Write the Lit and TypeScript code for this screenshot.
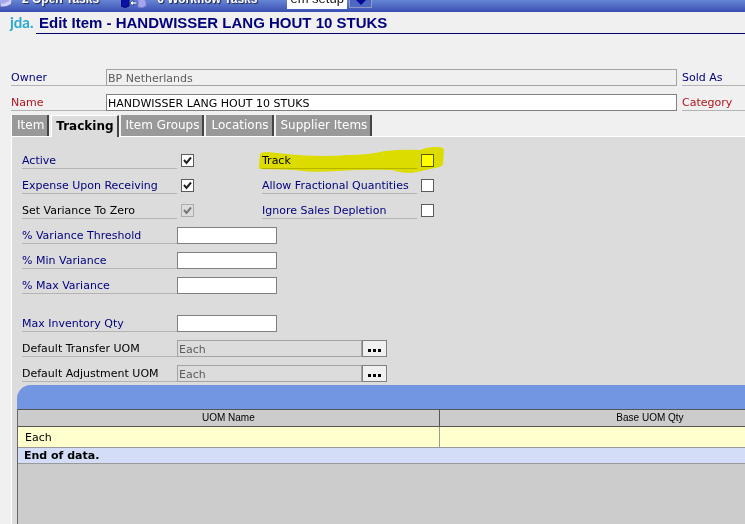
import { LitElement, html, css, nothing } from "lit";
import { customElement, property, state } from "lit/decorators.js";
import { classMap } from "lit/directives/class-map.js";

const shared = css`
  * {
    box-sizing: border-box;
  }
  input,
  button,
  select {
    font: inherit;
    color: inherit;
    margin: 0;
    padding: 0;
    border-radius: 0;
  }
`;

@customElement("task-bar")
class TaskBar extends LitElement {
  static styles = [
    shared,
    css`
      :host {
        display: flex;
        align-items: flex-end;
        height: 12px;
        overflow: hidden;
        background: linear-gradient(#6685d4, #3b50b2);
        font: bold 12px/16px "Liberation Sans", Arial, sans-serif;
        color: #fff;
      }
      svg {
        display: block;
        flex: none;
      }
      .task {
        display: flex;
        align-items: flex-end;
        flex: none;
        gap: 10px;
        height: 24px;
        margin-right: 22px;
        color: #fff;
        text-decoration: none;
        text-shadow: 1px 1px 1px #1c2450;
      }
      .task span {
        margin-bottom: 5px;
      }
      .task svg {
        margin-bottom: 2px;
      }
      .task.first svg {
        margin-bottom: 4px;
      }
      .site {
        appearance: none;
        flex: none;
        width: 60px;
        height: 20px;
        margin: 0 2px 3px 8px;
        padding: 0 3px;
        border: 0;
        background: #fff;
        color: #111;
        font-weight: normal;
        font-size: 13px;
      }
      .go {
        flex: none;
        width: 23px;
        height: 20px;
        margin-bottom: 4px;
        border: 1px solid #8e99bd;
        background: #4c68c2;
      }
      .go svg {
        margin: 8px auto 0;
      }
    `,
  ];

  render() {
    return html`
      <a class="task first" href="#open">
        <svg width="12" height="14" viewBox="0 0 12 14">
          <path d="M0 0H12V8C12 11 8 12 5 13H0Z" fill="#cdd0fb" stroke="#5054b4" />
          <path d="M0 9L3 10L9 7V4H0Z" fill="#a4a8ec" />
        </svg>
        <span>2 Open Tasks</span>
      </a>
      <a class="task" href="#workflow">
        <svg width="26" height="14" viewBox="0 0 26 14">
          <path d="M0 0H8V10Q4 13 0 10Z" fill="#0b10a6" stroke="#060a70" />
          <path d="M17 2H23L25 6V10Q21 13 17 11Z" fill="#a4a5ee" stroke="#7a7bd0" />
          <path d="M9 7L12 4V6H16V8H12V10Z" fill="#fff" stroke="#1d2c7d" stroke-width=".6" />
        </svg>
        <span>6 Workflow Tasks</span>
      </a>
      <select class="site" aria-label="Site">
        <option>em setup</option>
      </select>
      <button class="go" aria-label="Open site list">
        <svg width="12" height="8" viewBox="0 0 12 8">
          <path d="M1 0H11V2L6 7L1 2Z" fill="#000a96" />
        </svg>
      </button>
    `;
  }
}

type FieldKind = "text" | "check" | "lookup";

@customElement("form-row")
class FormRow extends LitElement {
  @property() label = "";
  @property() kind: FieldKind = "text";
  @property() value = "";
  @property() tone = "navy";
  @property({ type: Boolean }) checked = false;
  @property({ type: Boolean }) disabled = false;
  @property({ type: Boolean }) wide = false;

  static styles = [
    shared,
    css`
      :host {
        display: flex;
        height: 17px;
        font: 11px/17px "DejaVu Sans", Verdana, sans-serif;
      }
      label {
        flex: none;
        width: 155px;
        border-bottom: 1px solid #b4b4b4;
        white-space: nowrap;
        color: #00007d;
      }
      label.wide {
        width: 95px;
      }
      label.black {
        color: #000;
      }
      label.red {
        color: #b3141c;
      }
      .text {
        flex: none;
        width: 100px;
        height: 17px;
        padding: 1px 1px 0;
        border: 1px solid #808080;
        background: #fff;
        color: #000;
        outline: 0;
      }
      .text.wide {
        flex: 1;
        min-width: 0;
      }
      .text.lookup {
        width: 185px;
      }
      .text:disabled {
        border-color: #a3a3a3;
        background: transparent;
        color: #5c5c5c;
      }
      .check {
        appearance: none;
        display: block;
        width: 13px;
        height: 13px;
        margin: 2px 4px;
        border: 1px solid #5c5c5c;
        background: #fff;
      }
      .check:disabled {
        border-color: #adadad;
        background: transparent;
      }
      .box {
        display: grid;
      }
      .box > * {
        grid-area: 1 / 1;
      }
      .tick {
        margin: 2px 4px;
        fill: none;
        stroke: #222;
        stroke-width: 2;
        pointer-events: none;
      }
      .tick.off {
        stroke: #777;
      }
      .more {
        display: flex;
        flex: none;
        align-items: center;
        justify-content: center;
        width: 25px;
        height: 17px;
        border: 1px solid #808080;
        background: #f0f0f0;
      }
    `,
  ];

  private control() {
    if (this.kind === "check") {
      return html`<span class="box">
        <input class="check" id="field" type="checkbox" .checked=${this.checked} ?disabled=${this.disabled} />
        ${this.checked
          ? html`<svg class=${classMap({ tick: true, off: this.disabled })} width="13" height="13" viewBox="0 0 13 13">
              <path d="M3 6L5.5 9L10 3.5" />
            </svg>`
          : nothing}
      </span>`;
    }
    const lookup = this.kind === "lookup";
    return html`
      <input
        class=${classMap({ text: true, wide: this.wide, lookup })}
        id="field"
        type="text"
        .value=${this.value}
        ?disabled=${this.disabled}
      />
      ${lookup
        ? html`<button class="more" aria-label="Choose ${this.label}">
            <svg width="13" height="7" viewBox="0 0 13 7">
              <path d="M0 4H3V7H0ZM5 4H8V7H5ZM10 4H13V7H10Z" />
            </svg>
          </button>`
        : nothing}
    `;
  }

  render() {
    return html`
      <label for="field" class=${classMap({ wide: this.wide, [this.tone]: true })}>${this.label}</label>
      ${this.control()}
    `;
  }
}

@customElement("uom-grid")
class UomGrid extends LitElement {
  static styles = [
    shared,
    css`
      :host {
        display: flex;
        flex-direction: column;
        flex: 1;
        overflow: hidden;
        border-top-left-radius: 14px;
        background: #ccc;
        font: 11px/14px "DejaVu Sans", Verdana, sans-serif;
      }
      .caption {
        flex: none;
        height: 24px;
        background: #7396e3;
      }
      .body {
        flex: 1;
        border-left: 1px solid #666;
      }
      table {
        width: 116%;
        table-layout: fixed;
        border-collapse: separate;
        border-spacing: 0;
      }
      th,
      td {
        padding: 0 7px;
        text-align: left;
        color: #000;
      }
      th {
        height: 18px;
        border: solid #555;
        border-width: 1px 1px 1px 0;
        font: 10px/14px "Liberation Sans", Arial, sans-serif;
        text-align: center;
      }
      td {
        height: 21px;
        padding-top: 2px;
        border: solid #999;
        border-width: 0 1px 1px 0;
        background: #ffffce;
      }
      .end td {
        height: 16px;
        padding: 0 6px;
        background: #d3ddf7;
        font-weight: bold;
      }
    `,
  ];

  render() {
    return html`
      <div class="caption"></div>
      <div class="body">
        <table>
          <thead>
            <tr>
              <th>UOM Name</th>
              <th>Base UOM Qty</th>
            </tr>
          </thead>
          <tbody>
            <tr>
              <td>Each</td>
              <td></td>
            </tr>
            <tr class="end">
              <td colspan="2">End of data.</td>
            </tr>
          </tbody>
        </table>
      </div>
    `;
  }
}

@customElement("app-root")
class AppRoot extends LitElement {
  @state() private tab = "Tracking";

  private tabs = ["Item", "Tracking", "Item Groups", "Locations", "Supplier Items"];

  static styles = [
    shared,
    css`
      :host {
        display: flex;
        flex-direction: column;
        min-height: 100vh;
        overflow: hidden;
        background: #f0f0f0;
        font: 11px/17px "DejaVu Sans", Verdana, sans-serif;
      }
      header {
        display: flex;
        gap: 4px;
        padding-left: 10px;
      }
      .logo {
        width: 22px;
        font: bold 15px/21px Lato, sans-serif;
        color: #2ba9cc;
      }
      h1 {
        flex: 1;
        margin: 0;
        padding-left: 3px;
        border-bottom: 1px solid #00006e;
        font: bold 15px/21px "Liberation Sans", Arial, sans-serif;
        white-space: nowrap;
        color: #00007d;
      }
      .summary {
        display: grid;
        grid-template-columns: 1fr 63px;
        gap: 8px 5px;
        padding: 35px 0 0 11px;
      }
      .side {
        height: 17px;
        border-bottom: 1px solid #b4b4b4;
        color: #00007d;
      }
      .side.red {
        color: #b3141c;
      }
      .tabs {
        display: flex;
        gap: 2px;
        height: 22px;
        margin: 4px 0 0 11px;
        border-left: 1px solid #fff;
        border-bottom: 1px solid #fff;
      }
      .tab {
        height: 21px;
        padding: 0 3px 0 5px;
        border: 0;
        border-right: 2px solid #444;
        background: #999;
        color: #fff;
        font-size: 12px;
        white-space: nowrap;
      }
      .tab.on {
        height: 22px;
        padding-left: 4px;
        border-left: 1px solid #fff;
        border-top: 1px solid #fff;
        background: #dcdcdc;
        color: #000;
        font-weight: bold;
      }
      .panel {
        flex: 1;
        display: flex;
        flex-direction: column;
        margin-left: 11px;
        border-left: 1px solid #fff;
        background: #dcdcdc;
      }
      .fields {
        display: grid;
        grid-template-columns: 240px 1fr;
        padding: 15px 0 3px 10px;
      }
      .column {
        display: flex;
        flex-direction: column;
        gap: 8px;
      }
      .stock {
        padding-top: 13px;
      }
      .marked {
        position: relative;
      }
      .marker {
        position: absolute;
        left: -5px;
        top: -6px;
        mix-blend-mode: multiply;
        pointer-events: none;
      }
      uom-grid {
        margin-left: 5px;
      }
    `,
  ];

  render() {
    return html`
      <task-bar></task-bar>
      <header>
        <div class="logo">jda.</div>
        <h1>Edit Item - HANDWISSER LANG HOUT 10 STUKS</h1>
      </header>
      <section class="summary">
        <form-row label="Owner" value="BP Netherlands" wide disabled></form-row>
        <div class="side">Sold As</div>
        <form-row label="Name" value="HANDWISSER LANG HOUT 10 STUKS" tone="red" wide></form-row>
        <div class="side red">Category</div>
      </section>
      <nav class="tabs" role="tablist">
        ${this.tabs.map(
          (name) => html`<button
            role="tab"
            aria-selected=${name === this.tab}
            class=${classMap({ tab: true, on: name === this.tab })}
            @click=${() => (this.tab = name)}
          >
            ${name}
          </button>`
        )}
      </nav>
      <main class="panel">
        <div class="fields">
          <div class="column">
            <form-row label="Active" kind="check" checked></form-row>
            <form-row label="Expense Upon Receiving" kind="check" checked></form-row>
            <form-row label="Set Variance To Zero" kind="check" tone="black" checked disabled></form-row>
            <form-row label="% Variance Threshold"></form-row>
            <form-row label="% Min Variance"></form-row>
            <form-row label="% Max Variance"></form-row>
            <div class="column stock">
              <form-row label="Max Inventory Qty"></form-row>
              <form-row label="Default Transfer UOM" kind="lookup" value="Each" tone="black" disabled></form-row>
              <form-row label="Default Adjustment UOM" kind="lookup" value="Each" tone="black" disabled></form-row>
            </div>
          </div>
          <div class="column">
            <div class="marked">
              <form-row label="Track" kind="check"></form-row>
              <svg class="marker" width="188" height="30" viewBox="0 0 188 30">
                <path
                  d="M3 8Q4 6 10 6L40 9Q70 11 90 9Q112 9 128 5Q145 3 164 4Q168 1 180 1Q187 1 187 4L186 18Q185 21 178 22L155 27Q143 27 135 24Q110 23 80 25Q55 27 38 24L4 23Q1 23 2 21Z"
                  fill="#ff0"
                />
              </svg>
            </div>
            <form-row label="Allow Fractional Quantities" kind="check"></form-row>
            <form-row label="Ignore Sales Depletion" kind="check"></form-row>
          </div>
        </div>
        <uom-grid></uom-grid>
      </main>
    `;
  }
}
